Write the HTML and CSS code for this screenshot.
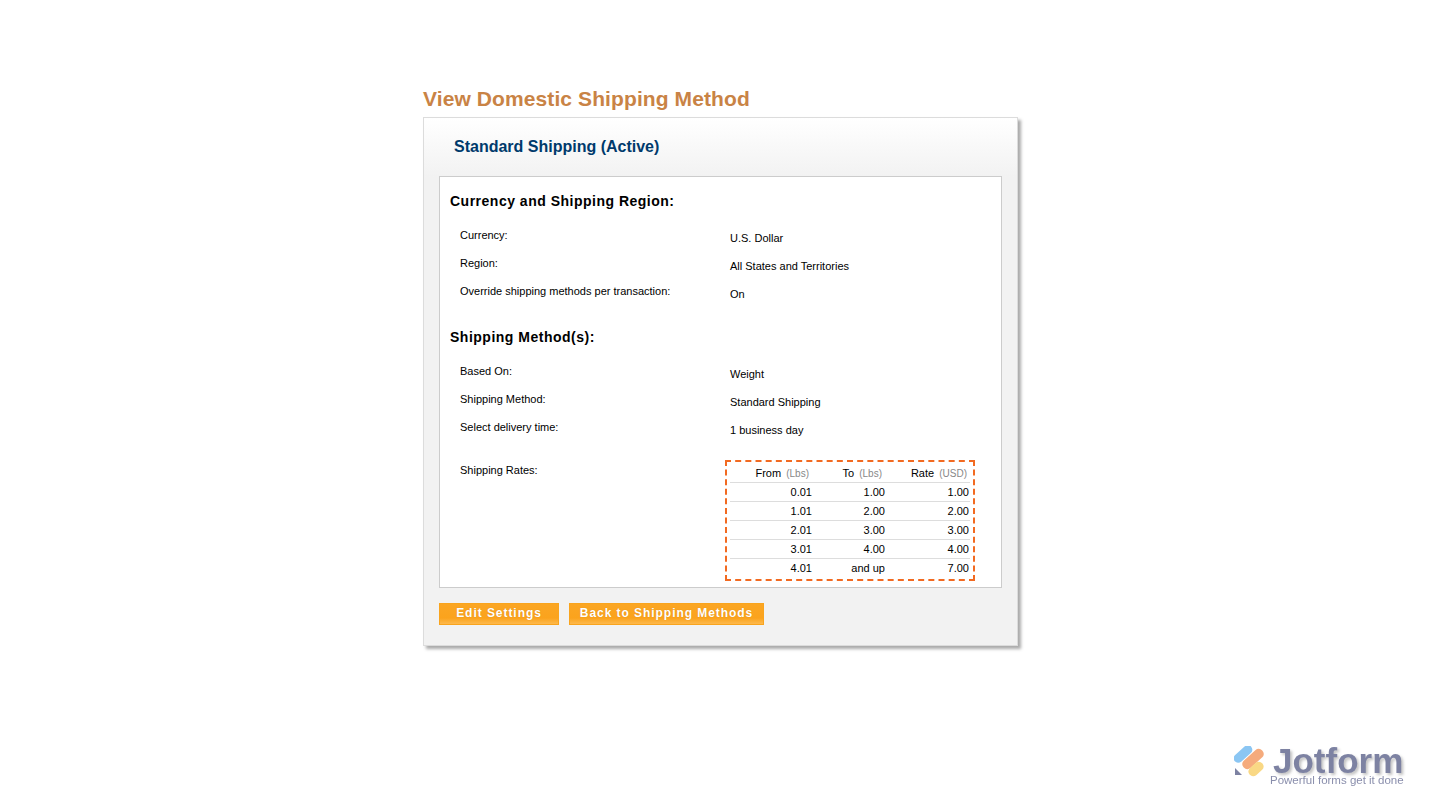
FILE: index.html
```html
<!DOCTYPE html>
<html lang="en">
<head>
    <meta charset="UTF-8">
    <title>View Domestic Shipping Method</title>
    <link rel="stylesheet" href="styles.css">
</head>
<body>
    <div class="wrapper">
        <h1 class="page-title">View Domestic Shipping Method</h1>
        <div class="card">
            <h2 class="card-title">Standard Shipping (Active)</h2>
            <div class="details">
                <h3 class="section-title">Currency and Shipping Region:</h3>
                <div class="row"><span class="label">Currency:</span><span class="value">U.S. Dollar</span></div>
                <div class="row"><span class="label">Region:</span><span class="value">All States and Territories</span></div>
                <div class="row"><span class="label">Override shipping methods per transaction:</span><span class="value">On</span></div>

                <h3 class="section-title second">Shipping Method(s):</h3>
                <div class="row"><span class="label">Based On:</span><span class="value">Weight</span></div>
                <div class="row"><span class="label">Shipping Method:</span><span class="value">Standard Shipping</span></div>
                <div class="row"><span class="label">Select delivery time:</span><span class="value">1 business day</span></div>

                <div class="row rates-row">
                    <span class="label">Shipping Rates:</span>
                    <div class="rates-box">
                        <table class="rates">
                            <thead>
                                <tr>
                                    <th class="col-from">From <small>(Lbs)</small></th>
                                    <th class="col-to">To <small>(Lbs)</small></th>
                                    <th class="col-rate">Rate <small>(USD)</small></th>
                                </tr>
                            </thead>
                            <tbody>
                                <tr><td>0.01</td><td>1.00</td><td>1.00</td></tr>
                                <tr><td>1.01</td><td>2.00</td><td>2.00</td></tr>
                                <tr><td>2.01</td><td>3.00</td><td>3.00</td></tr>
                                <tr><td>3.01</td><td>4.00</td><td>4.00</td></tr>
                                <tr><td>4.01</td><td>and up</td><td>7.00</td></tr>
                            </tbody>
                        </table>
                    </div>
                </div>
            </div>
            <div class="actions">
                <button class="btn btn-edit">Edit Settings</button>
                <button class="btn btn-back">Back to Shipping Methods</button>
            </div>
        </div>
    </div>

    <!-- watermark -->
    <div class="watermark">
        <svg class="watermark-icon" width="34" height="34" viewBox="0 0 34 34">
            <rect x="-2" y="3.5" width="22" height="9" rx="4.5" fill="#7fc0f2" transform="rotate(-42 9 8)"/>
            <rect x="6.5" y="8" width="25" height="10" rx="4.5" fill="#f4a36f" transform="rotate(-42 19 13)"/>
            <rect x="13.5" y="18.25" width="17" height="9.5" rx="4.5" fill="#f9d478" transform="rotate(-42 22 23)"/>
            <path d="M1 22 L8 29 L1 29 Z" fill="#6f7599"/>
        </svg>
        <div class="watermark-text">
            <div class="watermark-name">Jotform</div>
            <div class="watermark-tag">Powerful forms get it done</div>
        </div>
    </div>
</body>
</html>
```

FILE: styles.css
```css
html, body {
    height: 100%;
}
body {
    margin: 0;
    background: #fff;
    font-family: "Liberation Sans", Arial, sans-serif;
    color: #000;
}
.wrapper {
    width: 595px;
    margin-left: 423px;
    padding-top: 87px;
}
.page-title {
    margin: 0 0 6px;
    font-size: 21px;
    line-height: 24px;
    font-weight: bold;
    color: #c98345;
    letter-spacing: 0.1px;
}
.card {
    box-sizing: border-box;
    height: 529px;
    padding: 0 15px;
    border: 1px solid #dcdcdc;
    background: linear-gradient(#fff 0, #f2f2f2 59px);
    box-shadow: 3px 3px 3px #aaa;
}
.card-title {
    margin: 0;
    padding: 19px 0 0 15px;
    height: 39px;
    font-size: 16px;
    line-height: 19px;
    font-weight: bold;
    color: #003a6c;
}
.details {
    box-sizing: border-box;
    height: 412px;
    padding: 15px 26px 0 10px;
    border: 1px solid #ccc;
    background: #fff;
}
.section-title {
    margin: 0 0 18px;
    font-size: 14px;
    line-height: 19px;
    font-weight: bold;
    letter-spacing: 0.5px;
}
.section-title.second {
    margin-top: 15px;
}
.row {
    display: flex;
    height: 28px;
    padding-left: 10px;
    font-size: 11px;
    line-height: 13px;
}
.label {
    width: 270px;
}
.value {
    padding-top: 3px;
}
.rates-row {
    height: auto;
    margin-top: 15px;
}
.rates-box {
    box-sizing: border-box;
    width: 250px;
    height: 121px;
    margin: -4px 0 0 -5px;
    padding: 2px 3px 0;
    border: 2px dashed #f26a21;
}
.rates {
    width: 240px;
    border-collapse: collapse;
    table-layout: fixed;
    font-size: 11px;
    line-height: 13px;
}
.rates th {
    padding: 3px 6px 2px 0;
    height: 13px;
    text-align: right;
    font-weight: normal;
    border-bottom: 1px solid #ddd;
}
.rates th small {
    margin-left: 2px;
    font-size: 10px;
    color: #888;
}
.col-from { width: 79px; }
.col-to { width: 67px; }
.rates td {
    padding: 3px 3px 2px 0;
    height: 13px;
    text-align: right;
    border-bottom: 1px solid #ddd;
}
.rates tbody tr:last-child td {
    border-bottom: none;
}
.rates td:last-child {
    padding-right: 1px;
}
.rates th:last-child {
    padding-right: 3px;
}
.actions {
    display: flex;
    gap: 10px;
    margin-top: 15px;
}
.btn {
    box-sizing: border-box;
    height: 22px;
    padding: 0 0 2px;
    border: 1px solid #f9a41e;
    background: linear-gradient(#fba623 0, #fba31d 70%, #fdb94d 100%);
    color: #fff;
    font-family: inherit;
    font-size: 12px;
    font-weight: bold;
    letter-spacing: 0.95px;
    text-shadow: 0 0 1px rgba(160, 90, 0, 0.4);
}
.btn-edit { width: 120px; }
.btn-back { width: 195px; }
.watermark {
    position: absolute;
    left: 1234px;
    top: 745px;
    display: flex;
    gap: 5px;
    opacity: 0.9;
    filter: blur(0.5px);
}
.watermark-icon {
    margin-top: 1px;
}
.watermark-name {
    font-size: 35px;
    line-height: 32px;
    font-weight: bold;
    color: #6f7599;
    text-shadow: 2px 2px 3px #bbb;
}
.watermark-tag {
    margin-top: -3px;
    margin-left: -3px;
    font-size: 11.5px;
    line-height: 12px;
    color: #7d82a3;
}
```
